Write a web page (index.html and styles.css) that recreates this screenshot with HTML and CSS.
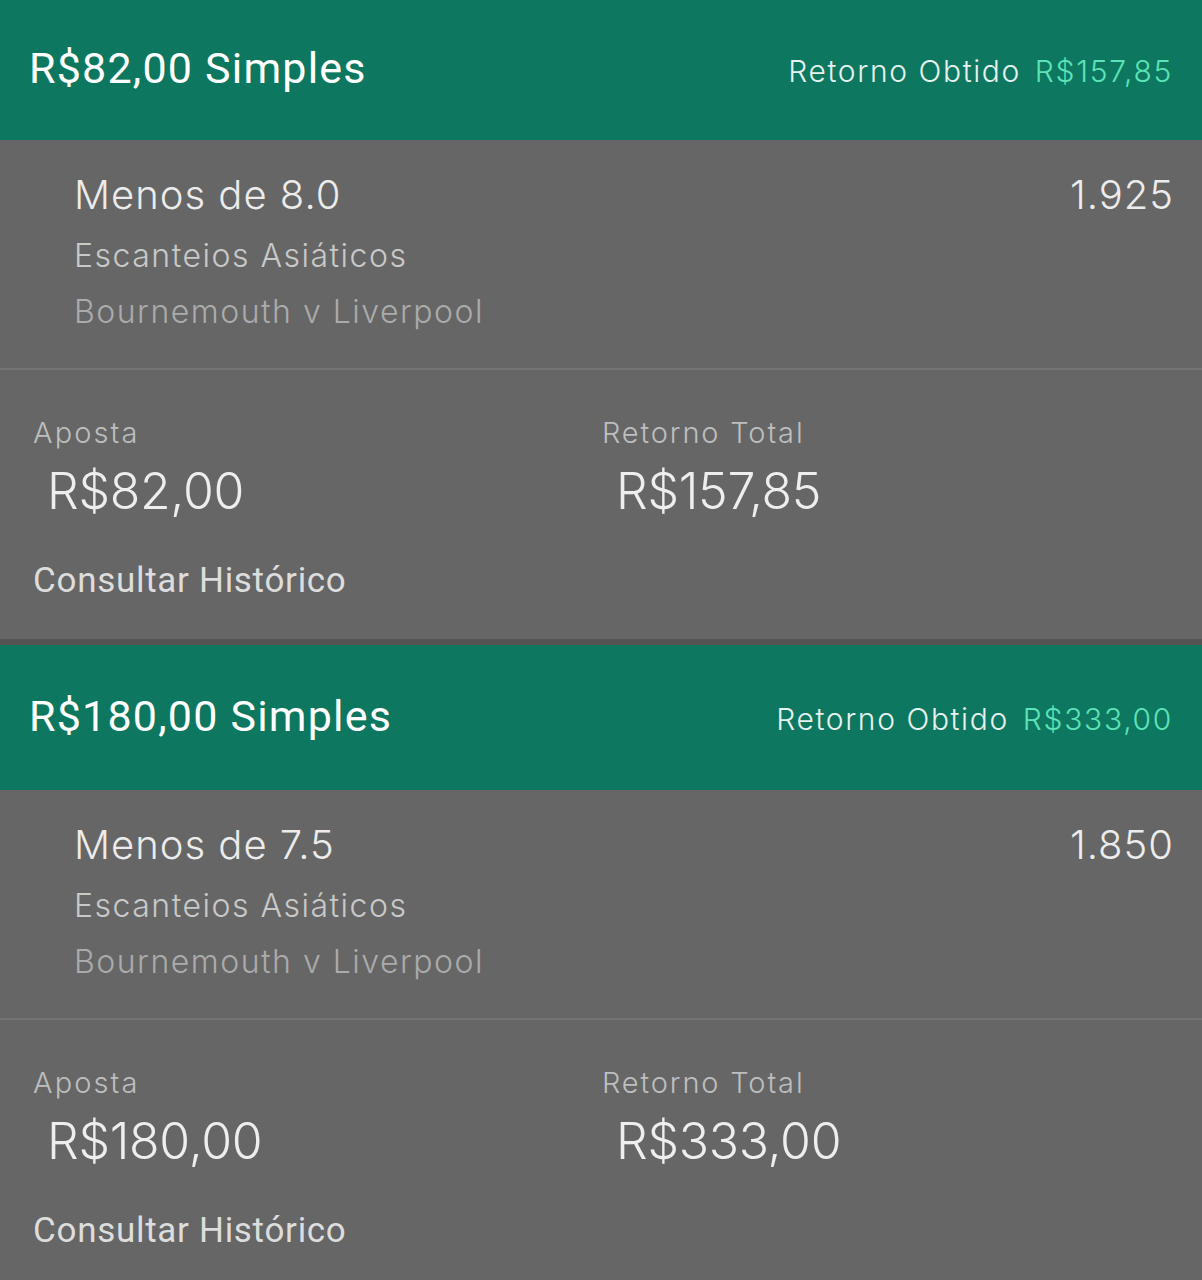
FILE: index.html
```html
<!DOCTYPE html>
<html lang="pt-BR">
<head>
<meta charset="utf-8">
<title>Apostas</title>
<link rel="stylesheet" href="styles.css">
</head>
<body>
<div class="list">
  <section class="card card-first">
    <header class="card-head">
      <div class="head-title">R$82,00 Simples</div>
      <div class="head-return"><span class="ret-label">Retorno Obtido</span><span class="ret-value">R$157,85</span></div>
    </header>
    <div class="selection">
      <div class="sel-row">
        <div class="sel-name">Menos de 8.0</div>
        <div class="sel-odds">1.925</div>
      </div>
      <div class="sel-market">Escanteios Asiáticos</div>
      <div class="sel-event">Bournemouth v Liverpool</div>
    </div>
    <div class="details">
      <div class="stats">
        <div class="stat">
          <div class="stat-label">Aposta</div>
          <div class="stat-value">R$82,00</div>
        </div>
        <div class="stat">
          <div class="stat-label">Retorno Total</div>
          <div class="stat-value">R$157,85</div>
        </div>
      </div>
      <div class="history">Consultar Histórico</div>
    </div>
  </section>
  <section class="card">
    <header class="card-head">
      <div class="head-title">R$180,00 Simples</div>
      <div class="head-return"><span class="ret-label">Retorno Obtido</span><span class="ret-value">R$333,00</span></div>
    </header>
    <div class="selection">
      <div class="sel-row">
        <div class="sel-name">Menos de 7.5</div>
        <div class="sel-odds">1.850</div>
      </div>
      <div class="sel-market">Escanteios Asiáticos</div>
      <div class="sel-event">Bournemouth v Liverpool</div>
    </div>
    <div class="details">
      <div class="stats">
        <div class="stat">
          <div class="stat-label">Aposta</div>
          <div class="stat-value">R$180,00</div>
        </div>
        <div class="stat">
          <div class="stat-label">Retorno Total</div>
          <div class="stat-value">R$333,00</div>
        </div>
      </div>
      <div class="history">Consultar Histórico</div>
    </div>
  </section>
</div>
</body>
</html>
```

FILE: styles.css
```css
html, body {
  margin: 0;
  padding: 0;
  background: #666666;
}
body {
  width: 1202px;
  height: 1280px;
  overflow: hidden;
  font-family: Inter, "Noto Sans", sans-serif;
  font-weight: 300;
}
.list {
  display: flex;
  flex-direction: column;
}
.card {
  display: flex;
  flex-direction: column;
  background: #666666;
  border-bottom: 6px solid #545454;
}
.card-head {
  height: 145px;
  box-sizing: border-box;
  background: #0e775f;
  display: flex;
  align-items: center;
  justify-content: space-between;
  padding: 0 29px 0 29px;
}
.card-first .card-head {
  height: 140px;
}
.head-title {
  font-family: Roboto, "Liberation Sans", sans-serif;
  font-weight: 400;
  font-size: 43px;
  letter-spacing: 1.2px;
  color: #ffffff;
  padding-bottom: 4px;
}
.head-return {
  display: flex;
  gap: 14px;
  font-size: 30px;
  padding-top: 2px;
}
.ret-label {
  color: #e6f2ee;
  letter-spacing: 1.6px;
}
.ret-value {
  color: #5ee3b8;
  letter-spacing: 1.7px;
}
.selection {
  height: 230px;
  box-sizing: border-box;
  padding: 26px 28px 0 74px;
  border-bottom: 2px solid #747474;
}
.sel-row {
  display: flex;
  justify-content: space-between;
  align-items: baseline;
  line-height: 58px;
}
.sel-name, .sel-odds {
  font-size: 40px;
  letter-spacing: 1px;
  color: #ececec;
}
.sel-market {
  font-size: 32px;
  line-height: 56px;
  margin-top: 4px;
  color: #c9c9c9;
  letter-spacing: 1.5px;
}
.sel-event {
  font-size: 32px;
  line-height: 56px;
  color: #ababab;
  letter-spacing: 1.5px;
}
.details {
  height: 269px;
  box-sizing: border-box;
  padding: 43px 0 0 33px;
}
.stats {
  display: grid;
  grid-template-columns: 569px 1fr;
}
.stat-label {
  font-size: 29px;
  line-height: 40px;
  color: #bebebe;
}
.stat:first-child .stat-label {
  letter-spacing: 2.1px;
}
.stat:last-child .stat-label {
  letter-spacing: 1.85px;
}
.stat-value {
  font-size: 50px;
  line-height: 72px;
  letter-spacing: -0.3px;
  color: #eeeeee;
  padding-left: 14px;
  margin-top: 2px;
}
.history {
  font-family: Roboto, "Liberation Sans", sans-serif;
  font-weight: 400;
  font-size: 35px;
  line-height: 50px;
  letter-spacing: 0.7px;
  margin-top: 29px;
  color: #dddddd;
}
```
